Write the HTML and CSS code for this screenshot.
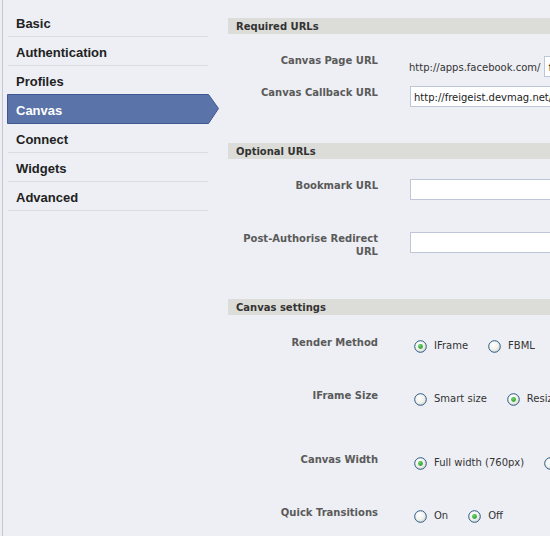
FILE: index.html
```html
<!DOCTYPE html>
<html>
<head>
<meta charset="utf-8">
<link rel="stylesheet" href="styles.css">
</head>
<body>
<div class="page">
  <nav class="sidebar">
    <ul class="menu">
      <li class="item">Basic</li>
      <li class="item">Authentication</li>
      <li class="item">Profiles</li>
      <li class="item active">
        <svg class="tab-bg" width="213" height="30" viewBox="0 0 213 30"><polygon points="0.5,0.5 201.5,0.5 211.5,14.5 201.5,29.5 0.5,29.5" fill="#5a73a8" stroke="#3e5893" stroke-width="1"/></svg>
        <span class="item-text">Canvas</span>
      </li>
      <li class="item">Connect</li>
      <li class="item">Widgets</li>
      <li class="item">Advanced</li>
    </ul>
  </nav>
  <main class="main">
    <h2 class="section">Required URLs</h2>
    <div class="row row-a">
      <div class="label">Canvas Page URL</div>
      <div class="field field-prefix"><span class="prefix">http://apps.facebook.com/</span><input class="text short" type="text" value="freigeist"></div>
    </div>
    <div class="row row-b">
      <div class="label">Canvas Callback URL</div>
      <div class="field"><input class="text" type="text" value="http://freigeist.devmag.net/"></div>
    </div>

    <h2 class="section sec2">Optional URLs</h2>
    <div class="row row-c">
      <div class="label">Bookmark URL</div>
      <div class="field"><input class="text" type="text" value=""></div>
    </div>
    <div class="row row-d">
      <div class="label two">Post-Authorise Redirect URL</div>
      <div class="field"><input class="text" type="text" value=""></div>
    </div>

    <h2 class="section sec3">Canvas settings</h2>
    <div class="row radio-row r1">
      <div class="label">Render Method</div>
      <div class="field radios">
        <span class="opt"><svg class="radio" width="13" height="13" viewBox="0 0 13 13"><use href="#r-on"/></svg>IFrame</span>
        <span class="opt"><svg class="radio" width="13" height="13" viewBox="0 0 13 13"><use href="#r-off"/></svg>FBML</span>
      </div>
    </div>
    <div class="row radio-row r2">
      <div class="label">IFrame Size</div>
      <div class="field radios">
        <span class="opt"><svg class="radio" width="13" height="13" viewBox="0 0 13 13"><use href="#r-off"/></svg>Smart size</span>
        <span class="opt"><svg class="radio" width="13" height="13" viewBox="0 0 13 13"><use href="#r-on"/></svg>Resizable</span>
      </div>
    </div>
    <div class="row radio-row r3">
      <div class="label">Canvas Width</div>
      <div class="field radios">
        <span class="opt"><svg class="radio" width="13" height="13" viewBox="0 0 13 13"><use href="#r-on"/></svg>Full width (760px)</span>
        <span class="opt"><svg class="radio" width="13" height="13" viewBox="0 0 13 13"><use href="#r-off"/></svg>Narrow (646px)</span>
      </div>
    </div>
    <div class="row radio-row r4">
      <div class="label">Quick Transitions</div>
      <div class="field radios">
        <span class="opt"><svg class="radio" width="13" height="13" viewBox="0 0 13 13"><use href="#r-off"/></svg>On</span>
        <span class="opt"><svg class="radio" width="13" height="13" viewBox="0 0 13 13"><use href="#r-on"/></svg>Off</span>
      </div>
    </div>
  </main>
</div>
<svg class="defs" width="0" height="0">
  <defs>
    <radialGradient id="rg" cx="0.4" cy="0.35" r="0.7">
      <stop offset="0" stop-color="#ffffff"/>
      <stop offset="0.6" stop-color="#f1f1ec"/>
      <stop offset="1" stop-color="#d4d4cc"/>
    </radialGradient>
    <radialGradient id="gd" cx="0.4" cy="0.35" r="0.7">
      <stop offset="0" stop-color="#6fd46f"/>
      <stop offset="1" stop-color="#1e9a1e"/>
    </radialGradient>
    <g id="r-off">
      <circle cx="6.5" cy="6.5" r="5.8" fill="url(#rg)" stroke="#2a5a86" stroke-width="1"/>
    </g>
    <g id="r-on">
      <circle cx="6.5" cy="6.5" r="5.8" fill="url(#rg)" stroke="#2a5a86" stroke-width="1"/>
      <circle cx="6.5" cy="6.5" r="2.4" fill="url(#gd)"/>
    </g>
  </defs>
</svg>
</body>
</html>
```
FILE: styles.css
```css
html, body {
  margin: 0;
  padding: 0;
}
body {
  width: 550px;
  height: 536px;
  overflow: hidden;
  background: #edeff4;
  font-family: "DejaVu Sans", Verdana, sans-serif;
  font-size: 10px;
  color: #222;
}
.page {
  display: flex;
  width: 800px;
  height: 536px;
}
.sidebar {
  box-sizing: border-box;
  flex: 0 0 226px;
  margin-left: 2px;
  border-left: 1px solid #c3c6cc;
  padding-top: 8px;
  padding-left: 5px;
}
.menu {
  list-style: none;
  margin: 0;
  padding: 0;
}
.item {
  width: 192px;
  height: 25px;
  line-height: 25px;
  padding-top: 3px;
  padding-left: 8px;
  border-bottom: 1px solid #d8dce4;
  font-family: "Liberation Sans", Arial, sans-serif;
  font-weight: bold;
  font-size: 13px;
  color: #222;
}
.item.active {
  position: relative;
  margin-top: -1px;
  margin-left: -1px;
  width: 204px;
  height: 27px;
  line-height: 27px;
  padding-top: 3px;
  padding-left: 9px;
  border-bottom: none;
  color: #fff;
}
.tab-bg {
  position: absolute;
  left: 0;
  top: 0;
}
.item-text {
  position: relative;
}
.main {
  flex: 1;
  padding-top: 18px;
}
.section {
  margin: 0;
  height: 16px;
  line-height: 18px;
  padding-left: 8px;
  background: #dcddd9;
  font-size: 10px;
  font-weight: bold;
  color: #333;
  overflow: hidden;
}
.sec2 { margin-top: 36px; }
.sec3 { margin-top: 41px; }
.row {
  display: flex;
  align-items: flex-start;
}
.label {
  flex: 0 0 150px;
  text-align: right;
  font-weight: bold;
  color: #5a5a5a;
  line-height: 14px;
  padding-top: 1px;
}
.label.two {
  line-height: 13px;
}
.field {
  margin-left: 32px;
  display: flex;
  align-items: center;
}
.row-a { margin-top: 19px; height: 32px; }
.row-a .field { margin-top: 3px; margin-left: 31px; }
.prefix { margin-right: 4px; color: #333; padding-top: 1px; }
.row-b .field { margin-top: 1px; }
.row-c { margin-top: 19px; height: 22px; }
.row-c .field { margin-top: 1px; }
.row-d { margin-top: 31px; }
.row-d .field { margin-top: 1px; }
.text {
  box-sizing: border-box;
  width: 260px;
  height: 21px;
  margin: 0;
  border: 1px solid #bdc7d8;
  background: #fff;
  padding: 1px 3px 0;
  font-family: "DejaVu Sans", Verdana, sans-serif;
  font-size: 10px;
  color: #222;
  outline: none;
}
.radio-row .field { margin-top: 4px; }
.r1 { margin-top: 20px; height: 53px; }
.r2 { height: 64px; }
.r3 { height: 53px; }
.radios .opt {
  display: flex;
  align-items: center;
  margin-right: 20px;
  color: #333;
  line-height: 14px;
  white-space: nowrap;
}
.radio {
  margin-left: 4px;
  margin-right: 7px;
  flex: 0 0 13px;
}
.radios .opt + .opt .radio { margin-left: 0; }
.defs {
  position: absolute;
  width: 0;
  height: 0;
}
```
